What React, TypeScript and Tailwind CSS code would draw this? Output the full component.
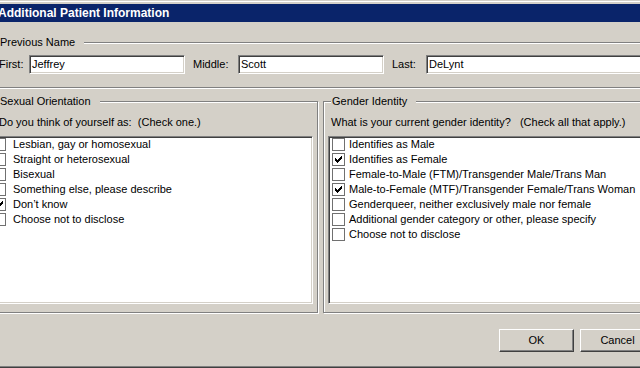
import React from 'react'

const sexualOptions = [
  { label: 'Lesbian, gay or homosexual', checked: false },
  { label: 'Straight or heterosexual', checked: false },
  { label: 'Bisexual', checked: false },
  { label: 'Something else, please describe', checked: false },
  { label: 'Don\u2019t know', checked: true },
  { label: 'Choose not to disclose', checked: false },
]

const genderOptions = [
  { label: 'Identifies as Male', checked: false },
  { label: 'Identifies as Female', checked: true },
  { label: 'Female-to-Male (FTM)/Transgender Male/Trans Man', checked: false },
  { label: 'Male-to-Female (MTF)/Transgender Female/Trans Woman', checked: true },
  { label: 'Genderqueer, neither exclusively male nor female', checked: false },
  { label: 'Additional gender category or other, please specify', checked: false },
  { label: 'Choose not to disclose', checked: false },
]

// classic 7x7 check mark, pixel rows
const checkPixels: [number, number, number][] = [
  [6, 0, 1],
  [5, 1, 2],
  [0, 2, 1], [4, 2, 3],
  [0, 3, 2], [3, 3, 3],
  [0, 4, 5],
  [1, 5, 3],
  [2, 6, 1],
]

function CheckBox({ checked }: { checked: boolean }) {
  return (
    <span className="w-[13px] h-[13px] shrink-0 bg-white border border-[#707070] flex">
      {checked && (
        <svg width="11" height="11" viewBox="0 0 11 11" shapeRendering="crispEdges">
          {checkPixels.map(([x, y, w], i) => (
            <rect key={i} x={x + 2} y={y + 2} width={w} height={1} fill="#000" />
          ))}
        </svg>
      )}
    </span>
  )
}

function OptionList({
  items,
  className,
  rowClass,
}: {
  items: { label: string; checked: boolean }[]
  className: string
  rowClass: string
}) {
  return (
    <div
      className={`bg-white border border-t-[#808080] border-l-[#808080] border-b-white border-r-white shadow-[inset_1px_1px_0_#404040,inset_-1px_-1px_0_#d4d0c8] ${className}`}
    >
      {items.map((item) => (
        <div key={item.label} className={`h-[15px] flex items-center whitespace-nowrap ${rowClass}`}>
          <CheckBox checked={item.checked} />
          <span>{item.label}</span>
        </div>
      ))}
    </div>
  )
}

function GroupLabel({ children }: { children: React.ReactNode }) {
  return (
    <span className="absolute top-[-7px] left-[7px] bg-[#d4d0c8] pl-[1px] pr-[9px] leading-[13px] whitespace-nowrap">
      {children}
    </span>
  )
}

function TextField({ value, width }: { value: string; width: string }) {
  return (
    <div
      className={`h-[19px] ${width} shrink-0 bg-white border border-t-[#808080] border-l-[#808080] border-b-white border-r-white shadow-[inset_1px_1px_0_#404040,inset_-1px_-1px_0_#d4d0c8] pl-[2px] flex items-center`}
    >
      {value}
    </div>
  )
}

function Button({ children }: { children: React.ReactNode }) {
  return (
    <button className="w-[75px] h-[23px] shrink-0 bg-[#d4d0c8] border border-t-white border-l-white border-b-[#404040] border-r-[#404040] shadow-[inset_-1px_-1px_0_#808080] text-center">
      {children}
    </button>
  )
}

export default function App() {
  return (
    <div className="w-[640px] h-[368px] overflow-hidden bg-[#d4d0c8] text-black text-[11px] font-['Liberation_Sans',Arial,sans-serif] flex flex-col">
      <div className="h-[1px] shrink-0" />
      <div className="h-[1px] shrink-0 bg-white" />
      <div className="h-[2px] shrink-0" />

      <div className="h-[18px] shrink-0 bg-[#0a246a] text-white font-bold text-[12px] flex items-center whitespace-nowrap overflow-hidden">
        <span className="ml-[-2px]">Additional Patient Information</span>
      </div>

      <div className="ml-[-9px] w-[660px] shrink-0">
        {/* Previous Name */}
        <div className="relative mt-[20px] h-[46px] border border-[#808080] shadow-[inset_1px_1px_0_#fff,1px_1px_0_#fff] pt-[12px] pl-[7px] flex items-start">
          <GroupLabel>Previous Name</GroupLabel>
          <span className="w-[30px] shrink-0 leading-[19px]">First:</span>
          <TextField value="Jeffrey" width="w-[156px]" />
          <span className="ml-[8px] w-[45px] shrink-0 leading-[19px]">Middle:</span>
          <TextField value="Scott" width="w-[146px]" />
          <span className="ml-[8px] w-[34px] shrink-0 leading-[19px]">Last:</span>
          <TextField value="DeLynt" width="w-[240px]" />
        </div>

        <div className="mt-[13px] flex gap-[5px]">
          {/* Sexual Orientation */}
          <div className="relative w-[327px] h-[212px] shrink-0 border border-[#808080] shadow-[inset_1px_1px_0_#fff,1px_1px_0_#fff] pt-[14px] pr-[4px] flex flex-col">
            <GroupLabel>Sexual Orientation</GroupLabel>
            <div className="pl-[7px] leading-[13px] whitespace-nowrap">
              Do you think of yourself as:&nbsp;&nbsp;(Check one.)
            </div>
            <OptionList
              items={sexualOptions}
              className="mt-[7px] h-[168px] ml-[-1px]"
              rowClass="pl-[1px] gap-[7px]"
            />
          </div>

          {/* Gender Identity */}
          <div className="relative flex-1 h-[212px] border border-[#808080] shadow-[inset_1px_1px_0_#fff,1px_1px_0_#fff] pt-[14px] flex flex-col">
            <GroupLabel>Gender Identity</GroupLabel>
            <div className="pl-[7px] leading-[13px] whitespace-nowrap">
              What is your current gender identity?&nbsp;&nbsp; (Check all that apply.)
            </div>
            <OptionList
              items={genderOptions}
              className="mt-[7px] h-[168px] ml-[4px]"
              rowClass="pl-[3px] gap-[4px]"
            />
          </div>
        </div>

        <div className="mt-[16px] flex gap-[6px] pl-[508px]">
          <Button>OK</Button>
          <Button>Cancel</Button>
        </div>
      </div>

      <div className="mt-auto h-[1px] shrink-0 bg-[#808080]" />
      <div className="h-[1px] shrink-0 bg-[#404040]" />
    </div>
  )
}
